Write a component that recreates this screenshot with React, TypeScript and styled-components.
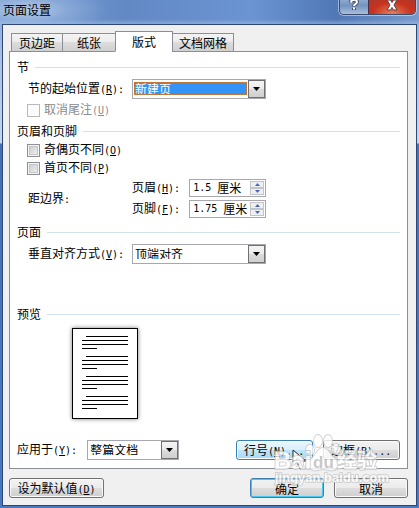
import React from "react";
import styled, { createGlobalStyle, css } from "styled-components";

const GlobalStyle = createGlobalStyle`
  * { box-sizing: border-box; }
  body { margin: 0; background: #5f86c2; }
  body, button, input, select {
    font: 12px/16px "Noto Sans CJK SC", sans-serif;
    color: #000;
  }
`;

const Shell = styled.div`
  position: relative;
`;

const Dialog = styled.main`
  display: flex;
  flex-direction: column;
  min-height: 100vh;
  padding: 0 2px 2px;
  background: linear-gradient(#83a5d6, #a9c2e4 60px, #c4d7ee 143px, #4470b8 144px, #4a78c0);
`;

const TitleBar = styled.header`
  display: flex;
  justify-content: space-between;
  height: 24px;
  margin: 0 -2px;
  padding: 0 3px;
  background:
    linear-gradient(rgba(255, 255, 255, 0) 80%, rgba(170, 196, 232, 0.5)),
    radial-gradient(ellipse 80px 24px at 28px 10px, #b4c9e6, rgba(150, 180, 222, 0.6) 50%, transparent),
    linear-gradient(90deg, #7ea3d6, #6389c5 30%, #6a94d2 60%, #5078b6 80%, #7899cb);
`;

const Title = styled.h1`
  margin: 0;
  font-size: 12px;
  font-weight: 400;
  line-height: 19px;
`;

const CaptionButtons = styled.div`
  display: flex;
  height: 15px;
  border: 1px solid #3c4c6c;
  border-top: 0;
  border-radius: 0 0 5px 5px;
  box-shadow: 0 0 0 1px rgba(255, 255, 255, 0.45);
  overflow: hidden;
`;

const CaptionButton = styled.button<{ $close?: boolean }>`
  display: flex;
  align-items: flex-start;
  justify-content: center;
  width: ${(p) => (p.$close ? 47 : 28)}px;
  padding: 0;
  border: 0;
  border-left: ${(p) => (p.$close ? "1px solid #4a3040" : "0")};
  background: ${(p) =>
    p.$close
      ? "radial-gradient(ellipse at 50% 100%, #e5825e, #c8321c 60%, #a83a30)"
      : "linear-gradient(#8ea9cf, #7593c0 40%, #a9bfdc)"};
`;

const Body = styled.div`
  flex: 1;
  padding: 6px 8px 7px 6px;
  border: 1px solid #2f4777;
  background: #f0f0f0;
`;

const Tabs = styled.nav`
  position: relative;
  display: flex;
  align-items: flex-end;
  margin: 0 2px -1px;
`;

const Tab = styled.button<{ $pad: number; $active?: boolean }>`
  height: 19px;
  padding: 0 ${(p) => p.$pad}px;
  border: 1px solid #8c8e97;
  background: linear-gradient(#f4f4f4, #ebebeb 48%, #dcdcdc 50%, #d0d0d0);
  & + & { margin-left: -1px; }
  ${(p) =>
    p.$active &&
    css`
      height: 21px;
      border-bottom-color: #fff;
      background: #fff;
    `}
`;

const Panel = styled.section`
  display: flex;
  flex-direction: column;
  padding: 7px 7px 8px;
  border: 1px solid #8c8e97;
  background: #fff;
`;

const SectionTitle = styled.h2<{ $gap?: number }>`
  display: flex;
  align-items: center;
  gap: 6px;
  margin: ${(p) => p.$gap ?? 0}px 0 0;
  font-size: 12px;
  font-weight: 400;
  line-height: 16px;
  &::after {
    content: "";
    flex: 1;
    height: 1px;
    background: #d3e2ea;
  }
`;

const Fields = styled.div`
  display: grid;
  grid-template-columns: 104px auto 1fr;
  align-items: center;
  justify-items: start;
  row-gap: 3px;
  padding: 4px 0 0 11px;
`;

const Label = styled.label`
  white-space: nowrap;
`;

const AreaLabel = styled.span`
  grid-row: span 2;
`;

const Latin = styled.span`
  font: 10px/16px "DejaVu Sans Mono", monospace;
`;

const Checks = styled.div<{ $top?: number }>`
  display: flex;
  flex-direction: column;
  align-items: flex-start;
  margin: ${(p) => p.$top ?? 0}px 0 -2px 10px;
`;

const CheckRow = styled.label<{ $disabled?: boolean }>`
  display: flex;
  align-items: center;
  gap: 4px;
  height: 18px;
  color: ${(p) => (p.$disabled ? "#8a8a8a" : "#000")};
`;

const CheckBox = styled.input`
  appearance: none;
  width: 13px;
  height: 13px;
  margin: 0;
  border: 1px solid #8e8f8f;
  background: linear-gradient(135deg, #c4c8ce, #f4f4f4);
  box-shadow: inset 0 0 0 1px #f4f4f4, inset 0 0 0 2px #c3c7cc;
  &:disabled {
    border-color: #b9b9b9;
    background: #fbfbfb;
    box-shadow: none;
  }
  &:checked { background: #3c6eb4; }
`;

const ComboFrame = styled.span<{ $width: number }>`
  display: flex;
  width: ${(p) => p.$width}px;
  height: 20px;
  border: 1px solid #a6a8ae;
  background: #fff;
`;

const ComboSelect = styled.select<{ $selected?: boolean }>`
  appearance: none;
  flex: 1;
  min-width: 0;
  margin: 2px 1px 3px;
  padding: 0;
  border: 1px solid transparent;
  border-radius: 0;
  outline: 0;
  line-height: 12px;
  background: transparent;
  ${(p) =>
    p.$selected &&
    css`
      color: #fff;
      background: #3294f8;
      border: 1px dotted #c47a3a;
    `}
`;

const ComboArrow = styled.span`
  display: flex;
  align-items: center;
  justify-content: center;
  width: 17px;
  border: 1px solid #707070;
  background: linear-gradient(#f4f4f4, #ebebeb 48%, #dcdcdc 50%, #cfcfcf);
  pointer-events: none;
`;

const SpinFrame = styled.span`
  display: flex;
  align-items: center;
  width: 77px;
  height: 18px;
  padding: 1px 1px 1px 3px;
  border: 1px solid #a6a8ae;
  background: #fff;
`;

const SpinInput = styled.input<{ $chars: number }>`
  width: ${(p) => p.$chars}ch;
  padding: 0;
  border: 0;
  outline: 0;
  background: transparent;
  font: 10px/14px "DejaVu Sans Mono", monospace;
`;

const Unit = styled.span`
  flex: 1;
  margin-left: 6px;
  line-height: 14px;
  white-space: nowrap;
`;

const SpinButtons = styled.span`
  display: flex;
  flex-direction: column;
`;

const SpinButton = styled.button`
  display: flex;
  align-items: center;
  justify-content: center;
  width: 14px;
  height: 7px;
  padding: 0;
  border: 1px solid #c2c4ca;
  background: #eeeff2;
`;

const Preview = styled.svg`
  margin: 6px 0 21px 55px;
  filter: drop-shadow(0 0 2px #777);
`;

const ApplyRow = styled.div`
  display: flex;
  align-items: center;
  justify-content: space-between;
  white-space: nowrap;
`;

const Group = styled.div<{ $gap: number }>`
  display: flex;
  align-items: center;
  gap: ${(p) => p.$gap}px;
`;

const Button = styled.button<{ $width: number; $tone?: "hot" | "default"; $start?: boolean }>`
  width: ${(p) => p.$width}px;
  height: 20px;
  padding: 1px 7px 0;
  border: 1px solid #707070;
  border-radius: 3px;
  box-shadow: inset 0 0 0 1px #fbfbfb;
  background: linear-gradient(#f3f3f3, #ebebeb 48%, #dddddd 50%, #cfcfcf);
  line-height: 16px;
  text-align: ${(p) => (p.$start ? "left" : "center")};
  white-space: nowrap;
  ${(p) =>
    p.$tone === "hot" &&
    css`
      border-color: #3c7fb1;
      background: linear-gradient(#eaf6fd, #d9f0fc 48%, #bee6fd 50%, #a7d9f5);
    `}
  ${(p) =>
    p.$tone === "default" &&
    css`
      border-color: #3c7fb1;
      box-shadow: inset 0 0 0 1px #46c8f0;
    `}
`;

const Footer = styled.footer`
  display: flex;
  justify-content: space-between;
  margin-top: 9px;
`;

const Overlay = styled.div`
  position: absolute;
  right: 0;
  bottom: 0;
  width: 150px;
  height: 80px;
  pointer-events: none;
`;

const Pointer = styled.svg`
  position: absolute;
  left: 23px;
  top: 21px;
`;

const Watermark = styled.svg`
  position: absolute;
  left: 0;
  top: 0;
  opacity: 0.8;
`;

const Key = ({ k, tail = "" }: { k: string; tail?: string }) => (
  <Latin>
    (<u>{k}</u>){tail}
  </Latin>
);

function Combo(p: { id: string; width: number; value: string; selected?: boolean }) {
  return (
    <ComboFrame $width={p.width}>
      <ComboSelect id={p.id} $selected={p.selected} defaultValue={p.value}>
        <option>{p.value}</option>
      </ComboSelect>
      <ComboArrow>
        <svg width="7" height="4" viewBox="0 0 7 4">
          <path d="M0 0h7L3.5 4z" />
        </svg>
      </ComboArrow>
    </ComboFrame>
  );
}

function Spinner({ id, value }: { id: string; value: string }) {
  return (
    <SpinFrame>
      <SpinInput id={id} defaultValue={value} $chars={value.length} />
      <Unit>厘米</Unit>
      <SpinButtons>
        <SpinButton aria-label="增加">
          <svg width="5" height="3" viewBox="0 0 5 3">
            <path d="M0 3h5L2.5 0z" fill="#4a65b5" />
          </svg>
        </SpinButton>
        <SpinButton aria-label="减少">
          <svg width="5" height="3" viewBox="0 0 5 3">
            <path d="M0 0h5L2.5 3z" fill="#4a65b5" />
          </svg>
        </SpinButton>
      </SpinButtons>
    </SpinFrame>
  );
}

const paragraphs = [8, 28, 48, 68];

export default function App() {
  return (
    <Shell>
      <GlobalStyle />
      <Dialog>
        <TitleBar>
          <Title>页面设置</Title>
          <CaptionButtons>
            <CaptionButton aria-label="帮助">
              <svg width="12" height="12" viewBox="0 0 12 12" fill="none">
                <path d="M3 2.5C3-1 9-1 9 2C9 4 6 4 6 6.500M6 8v2" stroke="#46526a" strokeWidth="4" />
                <path d="M3 2.5C3-1 9-1 9 2C9 4 6 4 6 6M6 7.500v2" stroke="#fff" strokeWidth="2" />
              </svg>
            </CaptionButton>
            <CaptionButton $close aria-label="关闭">
              <svg width="12" height="11" viewBox="0 0 12 11">
                <path
                  d="M1 0h3.500L6 2.500 7.500 0H11L8 5l3 5H7.500L6 7.500 4.500 10H1l3-5z"
                  fill="#fff"
                  stroke="#5a4048"
                />
              </svg>
            </CaptionButton>
          </CaptionButtons>
        </TitleBar>
        <Body>
          <Tabs>
            <Tab $pad={7}>页边距</Tab>
            <Tab $pad={14}>纸张</Tab>
            <Tab $pad={16} $active>
              版式
            </Tab>
            <Tab $pad={6}>文档网格</Tab>
          </Tabs>
          <Panel>
            <SectionTitle>节</SectionTitle>
            <Fields>
              <Label htmlFor="start">
                节的起始位置
                <Key k="R" tail=":" />
              </Label>
              <Combo id="start" width={134} value="新建页" selected />
            </Fields>
            <Checks $top={2}>
              <CheckRow $disabled>
                <CheckBox type="checkbox" disabled />
                <span>
                  取消尾注
                  <Key k="U" />
                </span>
              </CheckRow>
            </Checks>

            <SectionTitle $gap={6}>页眉和页脚</SectionTitle>
            <Checks $top={2}>
              <CheckRow>
                <CheckBox type="checkbox" />
                <span>
                  奇偶页不同
                  <Key k="O" />
                </span>
              </CheckRow>
              <CheckRow>
                <CheckBox type="checkbox" />
                <span>
                  首页不同
                  <Key k="P" />
                </span>
              </CheckRow>
            </Checks>
            <Fields>
              <AreaLabel>
                距边界<Latin>:</Latin>
              </AreaLabel>
              <Group $gap={9}>
                <Label htmlFor="head">
                  页眉
                  <Key k="H" tail=":" />
                </Label>
                <Spinner id="head" value="1.5" />
              </Group>
              <span />
              <Group $gap={9}>
                <Label htmlFor="foot">
                  页脚
                  <Key k="F" tail=":" />
                </Label>
                <Spinner id="foot" value="1.75" />
              </Group>
            </Fields>

            <SectionTitle $gap={6}>页面</SectionTitle>
            <Fields>
              <Label htmlFor="align">
                垂直对齐方式
                <Key k="V" tail=":" />
              </Label>
              <Combo id="align" width={134} value="顶端对齐" />
            </Fields>

            <SectionTitle $gap={42}>预览</SectionTitle>
            <Preview width="66" height="91" viewBox="0 0 66 91" shapeRendering="crispEdges">
              <rect x="0.5" y="0.5" width="65" height="90" fill="#fff" stroke="#000" />
              {paragraphs.map((y) => (
                <path
                  key={y}
                  d={`M14 ${y + 0.5}h42M10 ${y + 4.5}h46M10 ${y + 8.5}h46M10 ${y + 12.5}h15`}
                  stroke="#000"
                />
              ))}
            </Preview>
            <ApplyRow>
              <Group $gap={10}>
                <Label htmlFor="apply">
                  应用于
                  <Key k="Y" tail=":" />
                </Label>
                <Combo id="apply" width={92} value="整篇文档" />
              </Group>
              <Group $gap={10}>
                <Button $width={77} $tone="hot" $start>
                  行号
                  <Key k="N" tail="..." />
                </Button>
                <Button $width={77} $start>
                  边框
                  <Key k="B" tail="..." />
                </Button>
              </Group>
            </ApplyRow>
          </Panel>
          <Footer>
            <Button $width={95}>
              设为默认值
              <Key k="D" />
            </Button>
            <Group $gap={10}>
              <Button $width={74} $tone="default">
                确定
              </Button>
              <Button $width={74}>取消</Button>
            </Group>
          </Footer>
        </Body>
      </Dialog>
      <Overlay aria-hidden="true">
        <Pointer width="18" height="22" viewBox="0 0 18 22">
          <path d="M1 1v16l4-4 3 7 3-1-3-7h6z" fill="#fff" stroke="#222" />
        </Pointer>
        <Watermark
          width="150"
          height="80"
          viewBox="0 0 150 80"
          fill="#fff"
          stroke="#c8c8c8"
          strokeWidth="2"
          strokeLinejoin="round"
          paintOrder="stroke"
          fontFamily="Liberation Sans, Noto Sans CJK SC, sans-serif"
          fontWeight="700"
        >
          <ellipse cx="49" cy="13" rx="4" ry="6" />
          <ellipse cx="59" cy="13" rx="4" ry="6" />
          <ellipse cx="41" cy="22" rx="4" ry="5" />
          <ellipse cx="67" cy="21" rx="4" ry="5" />
          <path d="M54 20c-5 0-7 7-11 10-5 4-5 11 1 12 4 1 6-1 10-1s6 2 10 1c7-1 6-8 1-12-4-3-6-10-11-10z" />
          <text x="5" y="41" fontSize="24">Bai</text>
          <text x="44" y="40" fontSize="17" fill="#bbb" stroke="#fff">du</text>
          <text x="68" y="40" fontSize="20">经验</text>
          <text x="6" y="54" fontSize="13">jingyan.baidu.com</text>
        </Watermark>
      </Overlay>
    </Shell>
  );
}
